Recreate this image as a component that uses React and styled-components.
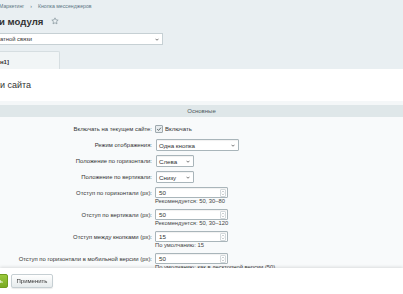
import React from 'react'
import styled, { createGlobalStyle } from 'styled-components'

const Global = createGlobalStyle`
  html, body { margin: 0; padding: 0; }
  body {
    background: #e9eff2;
    font-family: "Liberation Sans", Arial, sans-serif;
    color: #333;
    overflow: hidden;
    width: 403px;
    height: 294px;
  }
`

const Page = styled.div`
  display: flex;
  flex-direction: column;
`

const Crumbs = styled.div`
  display: flex;
  align-items: center;
  gap: 6px;
  height: 11px;
  margin-left: -1px;
  font-size: 5.2px;
  color: #5d7785;
`

const TitleRow = styled.div`
  display: flex;
  align-items: center;
  gap: 8px;
  height: 20px;
  margin-left: -1px;
  h1 {
    margin: 0;
    font-size: 9.6px;
    font-weight: 700;
    color: #333;
  }
`

const SiteSelect = styled.div`
  margin-top: 2px;
  width: 163px;
  height: 12px;
  box-sizing: border-box;
  background: #fff;
  border: 1px solid #c6d0d4;
  border-left: none;
  display: flex;
  align-items: center;
  justify-content: space-between;
  padding: 0 3px 0 0;
  font-size: 5.8px;
  color: #333;
`

const Tabs = styled.div`
  margin-top: 6px;
  display: flex;
  height: 18px;
`

const Tab = styled.div`
  width: 60px;
  box-sizing: border-box;
  background: #f1f5f6;
  border: 1px solid #d6dee1;
  border-left: none;
  border-bottom: none;
  border-radius: 0 2px 0 0;
  display: flex;
  align-items: center;
  font-size: 6px;
  font-weight: 700;
  padding-top: 3px;
`

const Panel = styled.div`
  background: #fff;
  display: flex;
  flex-direction: column;
`

const PanelTitle = styled.div`
  height: 32px;
  display: flex;
  align-items: center;
  font-size: 9px;
  color: #333;
  padding-bottom: 1px;
  box-sizing: border-box;
`

const Strip = styled.div`
  height: 4px;
  background: #f4f7f8;
`

const Band = styled.div`
  height: 12px;
  background: #dfe7e9;
  display: flex;
  align-items: center;
  justify-content: center;
  font-size: 6px;
  color: #4f5b60;
`

const Form = styled.div`
  background: #f8fafb;
  padding: 4px 0 30px;
  display: flex;
  flex-direction: column;
`

const Row = styled.div`
  display: grid;
  grid-template-columns: 152px 1fr;
  column-gap: 3px;
  padding: 2px 0;
`

const Label = styled.div`
  text-align: right;
  font-size: 5.9px;
  line-height: 12px;
  color: #333;
  white-space: nowrap;
`

const Field = styled.div`
  display: flex;
  flex-direction: column;
  align-items: flex-start;
`

const CheckLine = styled.label`
  display: flex;
  align-items: center;
  gap: 2px;
  height: 12px;
  font-size: 6px;
`

const Box = styled.span`
  width: 8px;
  height: 8px;
  box-sizing: border-box;
  border: 1px solid #9ea9ae;
  border-radius: 1px;
  background: #e8ecee;
  display: flex;
  align-items: center;
  justify-content: center;
`

const Select = styled.div`
  width: ${p => p.w}px;
  height: 12px;
  box-sizing: border-box;
  margin-left: 1px;
  background: #fff;
  border: 1px solid #a9b5ba;
  border-radius: 1px;
  box-shadow: inset 0 1px 1px rgba(0,0,0,.06);
  display: flex;
  align-items: center;
  justify-content: space-between;
  padding: 0 3px 0 2px;
  font-size: 6.2px;
`

const NumInput = styled.div`
  width: 73px;
  height: 11px;
  box-sizing: border-box;
  background: #fff;
  border: 1px solid #a9b5ba;
  border-radius: 1px;
  box-shadow: inset 0 1px 1px rgba(0,0,0,.06);
  display: flex;
  align-items: center;
  justify-content: space-between;
  padding: 0 1px 0 3px;
  font-size: 6.2px;
`

const Spin = styled.span`
  width: 6px;
  height: 8px;
  box-sizing: border-box;
  border: 1px solid #d3d9dc;
  border-radius: 1px;
  display: flex;
  align-items: center;
  justify-content: center;
`

const Hint = styled.div`
  font-size: 5.8px;
  line-height: 7px;
  color: #444;
  white-space: nowrap;
`

const Footer = styled.div`
  position: fixed;
  left: 0;
  right: 0;
  bottom: 0;
  height: 26px;
  background: #fff;
  box-shadow: 0 -1px 3px rgba(0,0,0,.12);
  display: flex;
  align-items: center;
  gap: 3px;
`

const Button = styled.div`
  height: 14px;
  box-sizing: border-box;
  border-radius: 2px;
  display: flex;
  align-items: center;
  justify-content: center;
  font-size: 6px;
  ${p => p.green ? `
    width: 40px;
    margin-left: -32px;
    background: linear-gradient(#9bc93c, #79a923);
    border: 1px solid #6f9c1e;
    color: #fff;
  ` : `
    width: 42px;
    background: linear-gradient(#ffffff, #e6ebed);
    border: 1px solid #c6cfd3;
    box-shadow: 0 1px 1px rgba(0,0,0,.08);
    color: #333;
  `}
`

const Chevron = () => (
  <svg width="4" height="3" viewBox="0 0 8 5">
    <path d="M1 1l3 3 3-3" fill="none" stroke="#555" strokeWidth="1.6" />
  </svg>
)

const Spinner = () => (
  <Spin>
    <svg width="4" height="6" viewBox="0 0 4 6">
      <path d="M0.8 2.3L2 1 3.2 2.3M0.8 3.7L2 5 3.2 3.7" fill="none" stroke="#a8b0b4" strokeWidth="0.6" />
    </svg>
  </Spin>
)

const Star = () => (
  <svg width="8" height="8" viewBox="0 0 24 24">
    <path d="M12 2.5l2.9 6.1 6.6.8-4.9 4.6 1.3 6.6L12 17.3l-5.9 3.3 1.3-6.6-4.9-4.6 6.6-.8z"
      fill="none" stroke="#7d8e96" strokeWidth="2" strokeLinejoin="round" />
  </svg>
)

const numRows = [
  { label: 'Отступ по горизонтали (px):', value: '50', hint: 'Рекомендуется: 50, 30–80' },
  { label: 'Отступ по вертикали (px):', value: '50', hint: 'Рекомендуется: 50, 30–120' },
  { label: 'Отступ между кнопками (px):', value: '15', hint: 'По умолчанию: 15' },
  { label: 'Отступ по горизонтали в мобильной версии (px):', value: '50', hint: 'По умолчанию: как в десктопной версии (50)' },
]

export default function App() {
  return (
    <Page>
      <Global />
      <Crumbs>
        <span>Маркетинг</span>
        <span>›</span>
        <span>Кнопка мессенджеров</span>
      </Crumbs>
      <TitleRow>
        <h1>и модуля</h1>
        <Star />
      </TitleRow>
      <SiteSelect>
        <span>атной связи</span>
        <Chevron />
      </SiteSelect>
      <Tabs>
        <Tab>н1]</Tab>
      </Tabs>
      <Panel>
        <PanelTitle>и сайта</PanelTitle>
        <Strip />
        <Band>Основные</Band>
        <Form>
          <Row>
            <Label>Включать на текущем сайте:</Label>
            <Field>
              <CheckLine>
                <Box>
                  <svg width="6" height="6" viewBox="0 0 10 10">
                    <path d="M2 5.2l2.2 2.2L8.3 2.8" fill="none" stroke="#5a666b" strokeWidth="1.6" />
                  </svg>
                </Box>
                Включать
              </CheckLine>
            </Field>
          </Row>
          <Row>
            <Label>Режим отображения:</Label>
            <Field>
              <Select w={83}><span>Одна кнопка</span><Chevron /></Select>
            </Field>
          </Row>
          <Row>
            <Label>Положение по горизонтали:</Label>
            <Field>
              <Select w={38}><span>Слева</span><Chevron /></Select>
            </Field>
          </Row>
          <Row>
            <Label>Положение по вертикали:</Label>
            <Field>
              <Select w={38}><span>Снизу</span><Chevron /></Select>
            </Field>
          </Row>
          {numRows.map(r => (
            <Row key={r.label}>
              <Label>{r.label}</Label>
              <Field>
                <NumInput><span>{r.value}</span><Spinner /></NumInput>
                <Hint>{r.hint}</Hint>
              </Field>
            </Row>
          ))}
        </Form>
      </Panel>
      <Footer>
        <Button green>Сохранить</Button>
        <Button>Применить</Button>
      </Footer>
    </Page>
  )
}
